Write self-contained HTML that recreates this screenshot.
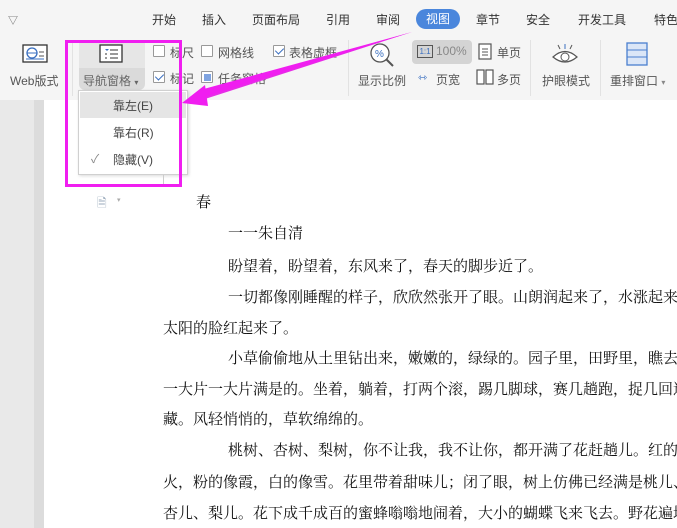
<!DOCTYPE html>
<html><head><meta charset="utf-8"><style>
*{margin:0;padding:0;box-sizing:border-box}
body{width:677px;height:528px;overflow:hidden;position:relative;background:#fff;font-family:"Liberation Sans","Noto Sans CJK SC",sans-serif;color:#333}
.a{position:absolute;white-space:nowrap}
.tab{font-size:12px;color:#333;top:11px}
.rb{font-size:12px;color:#555}
.cb{position:absolute;width:12px;height:12px;border:1px solid #999;background:#fff;border-radius:1px}
.cb.on::after{content:"";position:absolute;left:3px;top:0px;width:4px;height:7px;border:solid #3a6fc0;border-width:0 1.5px 1.5px 0;transform:rotate(45deg)}
.doc{font-family:"Noto Serif CJK SC","Noto Sans CJK SC",serif;font-size:15px;color:#111;position:absolute;white-space:nowrap}
.sep{position:absolute;top:40px;width:1px;height:56px;background:#e2e2e2}
</style></head><body>
<div class="a" style="left:0;top:0;width:677px;height:100px;background:#f5f5f5"></div>
<div class="a" style="left:0;top:100px;width:44px;height:428px;background:#e9e9e9"></div>
<div class="a" style="left:34px;top:100px;width:10px;height:428px;background:#dcdcdc"></div>

<div class="a" style="left:8px;top:12px;font-size:10px;color:#666">▽</div>
<div class="a tab" style="left:152px">开始</div>
<div class="a tab" style="left:202px">插入</div>
<div class="a tab" style="left:252px">页面布局</div>
<div class="a tab" style="left:326px">引用</div>
<div class="a tab" style="left:376px">审阅</div>
<div class="a" style="left:416px;top:9px;width:44px;height:20px;border-radius:10px;background:#4a86dc;color:#fff;font-size:12px;text-align:center;line-height:20px">视图</div>
<div class="a tab" style="left:476px">章节</div>
<div class="a tab" style="left:526px">安全</div>
<div class="a tab" style="left:578px">开发工具</div>
<div class="a tab" style="left:654px">特色</div>

<!-- Web -->
<svg class="a" style="left:22px;top:44px" width="26" height="20"><rect x="1" y="1" width="24" height="17" fill="#fff" stroke="#333" stroke-width="1.3"/><circle cx="10" cy="9" r="5" fill="none" stroke="#3a6fc0" stroke-width="1.3"/><line x1="5" y1="9" x2="15" y2="9" stroke="#3a6fc0"/><line x1="17" y1="8" x2="22" y2="8" stroke="#555"/><line x1="17" y1="12" x2="22" y2="12" stroke="#555"/><line x1="4" y1="15" x2="22" y2="15" stroke="#3a6fc0"/></svg>
<div class="a rb" style="left:10px;top:72px">Web版式</div>
<div class="sep" style="left:72px"></div>
<!-- nav pane -->
<div class="a" style="left:79px;top:40px;width:66px;height:50px;background:#dadada;border-radius:0 0 6px 6px"></div>
<div class="a" style="left:79px;top:40px;width:66px;height:28px;background:#e6e6e6"></div>
<svg class="a" style="left:99px;top:44px" width="24" height="20"><rect x="1" y="1" width="22" height="17" fill="#fff" stroke="#333" stroke-width="1.3"/><path d="M6 5l2 2 2-2z" fill="#3a6fc0"/><line x1="11" y1="6" x2="19" y2="6" stroke="#333"/><line x1="6" y1="10" x2="8" y2="10" stroke="#333"/><line x1="11" y1="10" x2="19" y2="10" stroke="#333"/><line x1="6" y1="14" x2="8" y2="14" stroke="#333"/><line x1="11" y1="14" x2="19" y2="14" stroke="#333"/></svg>
<div class="a rb" style="left:83px;top:72px;color:#666">导航窗格 <span style="font-size:8px">▾</span></div>

<div class="cb" style="left:153px;top:45px"></div><div class="a rb" style="left:170px;top:44px">标尺</div>
<div class="cb" style="left:201px;top:45px"></div><div class="a rb" style="left:218px;top:44px">网格线</div>
<div class="cb on" style="left:273px;top:45px"></div><div class="a rb" style="left:289px;top:44px">表格虚框</div>
<div class="cb on" style="left:153px;top:71px"></div><div class="a rb" style="left:170px;top:70px">标记</div>
<div class="cb" style="left:201px;top:71px"><div style="position:absolute;left:2px;top:2px;width:7px;height:7px;background:#7fa3e0"></div></div><div class="a rb" style="left:218px;top:70px">任务窗格</div>
<div class="sep" style="left:348px"></div>
<svg class="a" style="left:369px;top:42px" width="26" height="26"><circle cx="11" cy="11" r="9" fill="#fff" stroke="#555" stroke-width="1.3"/><text x="6" y="15" font-size="10" fill="#3a6fc0" font-family="Liberation Sans">%</text><line x1="17" y1="17" x2="24" y2="24" stroke="#555" stroke-width="2"/></svg>
<div class="a rb" style="left:358px;top:72px">显示比例</div>
<div class="a" style="left:412px;top:40px;width:60px;height:24px;background:#d4d4d4;border-radius:4px"></div>
<div class="a" style="left:417px;top:45px;width:16px;height:13px;border:1px solid #555;font-size:8px;line-height:11px;text-align:center;color:#3a6fc0">1:1</div>
<div class="a rb" style="left:436px;top:44px;color:#888">100%</div>
<div class="a" style="left:418px;top:71px;font-size:11px;color:#3a6fc0">⇿</div>
<div class="a rb" style="left:436px;top:71px">页宽</div>
<svg class="a" style="left:478px;top:43px" width="14" height="17"><rect x="1" y="1" width="12" height="15" fill="#fff" stroke="#555" stroke-width="1.2"/><line x1="4" y1="6" x2="10" y2="6" stroke="#555"/><line x1="4" y1="9" x2="10" y2="9" stroke="#555"/><line x1="4" y1="12" x2="10" y2="12" stroke="#555"/></svg>
<div class="a rb" style="left:497px;top:44px">单页</div>
<svg class="a" style="left:476px;top:69px" width="18" height="16"><rect x="1" y="1" width="7" height="14" fill="#fff" stroke="#555" stroke-width="1.2"/><rect x="10" y="1" width="7" height="14" fill="#fff" stroke="#555" stroke-width="1.2"/></svg>
<div class="a rb" style="left:497px;top:71px">多页</div>
<div class="sep" style="left:530px"></div>
<svg class="a" style="left:550px;top:42px" width="30" height="24"><path d="M3 15 Q15 4 27 15 Q15 25 3 15z" fill="#fff" stroke="#555" stroke-width="1.2"/><circle cx="15" cy="15" r="4" fill="none" stroke="#555"/><line x1="15" y1="2" x2="15" y2="7" stroke="#3a6fc0"/><line x1="8" y1="3" x2="10" y2="7" stroke="#555"/><line x1="22" y1="3" x2="20" y2="7" stroke="#555"/></svg>
<div class="a rb" style="left:542px;top:72px">护眼模式</div>
<div class="sep" style="left:600px"></div>
<svg class="a" style="left:626px;top:42px" width="22" height="24"><rect x="1" y="1" width="20" height="22" fill="#dbe6f7" stroke="#4a7fcf" stroke-width="1.3"/><line x1="1" y1="8" x2="21" y2="8" stroke="#4a7fcf"/><line x1="1" y1="15" x2="21" y2="15" stroke="#4a7fcf"/></svg>
<div class="a rb" style="left:610px;top:72px">重排窗口 <span style="font-size:8px;color:#888">▾</span></div>

<!-- dropdown -->
<div class="a" style="left:78px;top:90px;width:110px;height:85px;background:#fff;border:1px solid #d0d0d0;box-shadow:1px 1px 3px rgba(0,0,0,.15)"></div>
<div class="a" style="left:80px;top:92px;width:106px;height:26px;background:#e5e5e5"></div>
<div class="a" style="left:113px;top:97px;font-size:12px;color:#444">靠左(E)</div>
<div class="a" style="left:113px;top:124px;font-size:12px;color:#444">靠右(R)</div>
<div class="a" style="left:91px;top:150px;font-size:12px;color:#888">✓</div>
<div class="a" style="left:113px;top:151px;font-size:12px;color:#444">隐藏(V)</div>
<div class="a" style="left:163px;top:175px;width:1px;height:10px;background:#ccc"></div>

<div class="a" style="left:65px;top:40px;width:117px;height:147px;border:3px solid #f01ef0"></div>
<svg class="a" style="left:0;top:0" width="677" height="200"><path d="M412 32 L203 93 L205 99 Z" fill="#e62ee6"/><path d="M412 32 L200 90 L202 98 Z" fill="#f01ef0"/><path d="M182 103 L205 85 L208 106 Z" fill="#f01ef0"/></svg>

<div class="a" style="left:97px;top:194px;font-size:12px;color:#9ab">🗎</div>
<div class="a" style="left:117px;top:196px;font-size:7px;color:#aaa">▾</div>

<div class="doc" style="left:196px;top:191px">春</div>
<div class="doc" style="left:228px;top:222px">一一朱自清</div>
<div class="doc" style="left:228px;top:255px">盼望着，盼望着，东风来了，春天的脚步近了。</div>
<div class="doc" style="left:228px;top:286px">一切都像刚睡醒的样子，欣欣然张开了眼。山朗润起来了，水涨起来了，</div>
<div class="doc" style="left:163px;top:317px">太阳的脸红起来了。</div>
<div class="doc" style="left:228px;top:347px">小草偷偷地从土里钻出来，嫩嫩的，绿绿的。园子里，田野里，瞧去，</div>
<div class="doc" style="left:163px;top:378px">一大片一大片满是的。坐着，躺着，打两个滚，踢几脚球，赛几趟跑，捉几回迷</div>
<div class="doc" style="left:163px;top:408px">藏。风轻悄悄的，草软绵绵的。</div>
<div class="doc" style="left:228px;top:439px">桃树、杏树、梨树，你不让我，我不让你，都开满了花赶趟儿。红的像</div>
<div class="doc" style="left:163px;top:471px">火，粉的像霞，白的像雪。花里带着甜味儿；闭了眼，树上仿佛已经满是桃儿、</div>
<div class="doc" style="left:163px;top:502px">杏儿、梨儿。花下成千成百的蜜蜂嗡嗡地闹着，大小的蝴蝶飞来飞去。野花遍地</div>
</body></html>
